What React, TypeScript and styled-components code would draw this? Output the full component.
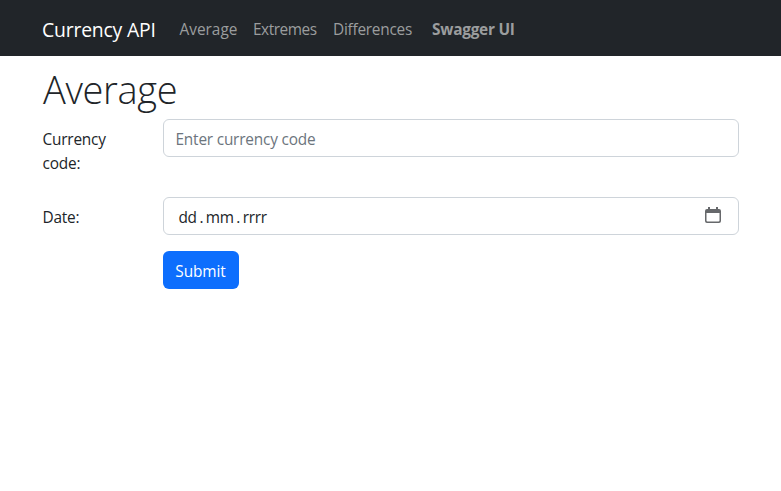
import React from 'react';
import styled, { createGlobalStyle } from 'styled-components';

const GlobalStyle = createGlobalStyle`
  *, *::before, *::after { box-sizing: border-box; }
  html, body { margin: 0; background: #fff; overflow: hidden; }
  body {
    font-family: "Open Sans", "Noto Sans", sans-serif;
    font-size: 15.4px;
    line-height: 24px;
    letter-spacing: -0.2px;
    color: #212529;
  }
`;

const Navbar = styled.nav`
  height: 56px;
  background: #212529;
  display: flex;
  align-items: center;
  padding: 4px 42px 0;
  white-space: nowrap;
`;

const Brand = styled.a`
  font-size: 19.4px;
  line-height: 30px;
  letter-spacing: -0.2px;
  color: #fff;
  width: 113.5px;
  margin-right: 24px;
`;

const NavLink = styled.a<{ $w: number; $spacing: number; $bold?: boolean }>`
  width: ${(p) => p.$w}px;
  margin-right: 16px;
  letter-spacing: ${(p) => p.$spacing}px;
  font-weight: ${(p) => (p.$bold ? 700 : 400)};
  color: #9b9d9e;
`;

const Container = styled.main`
  padding: 9px 42px 0;
`;

const Title = styled.h1`
  margin: 0 0 6px 1px;
  font-size: 38px;
  font-weight: 300;
  line-height: 48px;
  letter-spacing: -0.35px;
`;

const Form = styled.form`
  display: grid;
  grid-template-columns: 96.5px 1fr;
  column-gap: 24px;
`;

const Label = styled.label`
  padding: 9px 0 0 0.5px;
`;

const Field = styled.div<{ $mb: number }>`
  height: 38px;
  margin-bottom: ${(p) => p.$mb}px;
  border: 1px solid #ced4da;
  border-radius: 6px;
  display: flex;
  align-items: center;
  justify-content: space-between;
  padding: 3px 17px 0 12px;
`;

const Input = styled.input`
  width: 100%;
  border: 0;
  outline: 0;
  padding: 0;
  background: transparent;
  font: inherit;
  letter-spacing: inherit;
  color: #212529;
  &::placeholder { color: #6c757d; opacity: 1; }
`;

const DateText = styled.span`
  padding-left: 3px;
  word-spacing: -0.9px;
  letter-spacing: -0.35px;
`;

const CalendarIcon = styled.svg`
  width: 16px;
  height: 16px;
  margin-bottom: 5px;
`;

const Submit = styled.button`
  grid-column: 2;
  justify-self: start;
  width: 76px;
  height: 38px;
  padding: 3px 0 0;
  border: 0;
  border-radius: 6px;
  background: #0d6efd;
  color: #fff;
  font: inherit;
  letter-spacing: -0.1px;
`;

export default function App() {
  return (
    <>
      <GlobalStyle />
      <Navbar>
        <Brand>Currency API</Brand>
        <NavLink $w={57.5} $spacing={0}>Average</NavLink>
        <NavLink $w={64} $spacing={-0.45}>Extremes</NavLink>
        <NavLink $w={83} $spacing={-0.25}>Differences</NavLink>
        <NavLink $w={84} $spacing={-0.25} $bold>Swagger UI</NavLink>
      </Navbar>
      <Container>
        <Title>Average</Title>
        <Form>
          <Label htmlFor="code">Currency code:</Label>
          <Field $mb={40}>
            <Input id="code" placeholder="Enter currency code" />
          </Field>
          <Label>Date:</Label>
          <Field $mb={16}>
            <DateText>dd . mm . rrrr</DateText>
            <CalendarIcon viewBox="0 0 16 16" aria-hidden="true">
              <path
                fill="#66686b"
                fillRule="evenodd"
                d="M3 0h2v2h6V0h2v2h1a2 2 0 0 1 2 2v10a2 2 0 0 1-2 2H2a2 2 0 0 1-2-2V4a2 2 0 0 1 2-2h1zM1.5 6v7.5a1 1 0 0 0 1 1h11a1 1 0 0 0 1-1V6z"
              />
            </CalendarIcon>
          </Field>
          <Submit type="button">Submit</Submit>
        </Form>
      </Container>
    </>
  );
}
